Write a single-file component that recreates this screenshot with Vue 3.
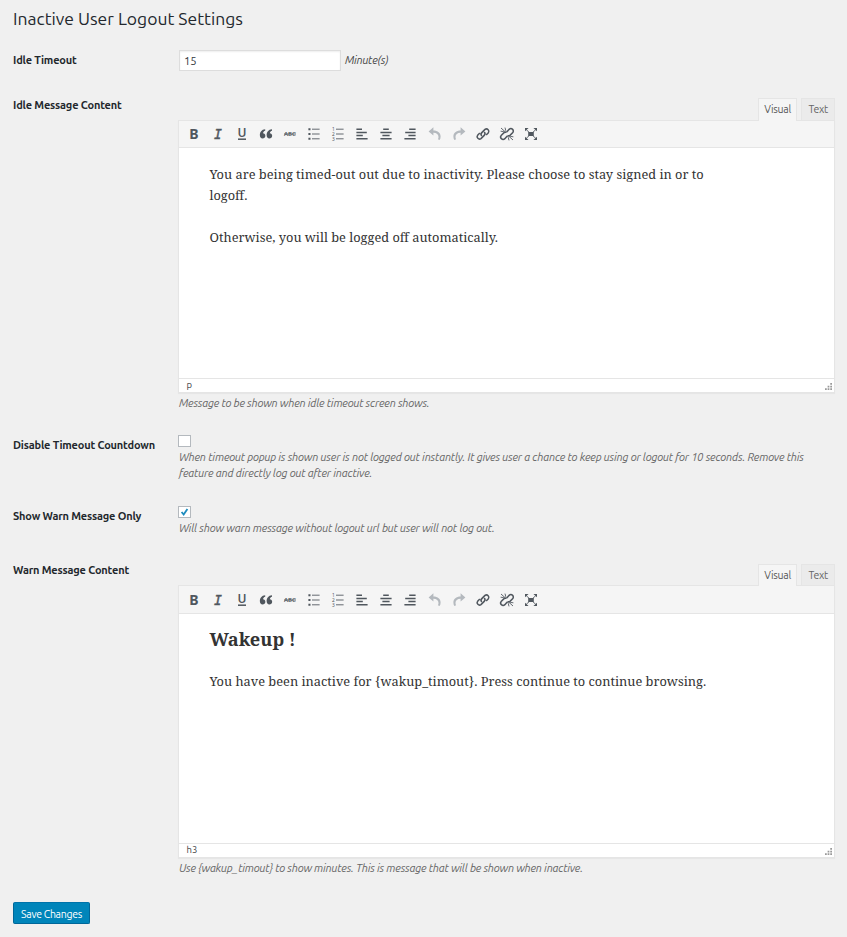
<script setup>
import { ref } from 'vue'

const timeout = ref('15')
const disableCountdown = ref(false)
const warnOnly = ref(true)

const idleTab = ref('Visual')
const warnTab = ref('Visual')
const tabs = ['Visual', 'Text']

const editors = [
  {
    id: 'idle',
    label: 'Idle Message Content',
    tab: idleTab,
    path: 'p',
    help: 'Message to be shown when idle timeout screen shows.',
  },
  {
    id: 'warn',
    label: 'Warn Message Content',
    tab: warnTab,
    path: 'h3',
    help: 'Use {wakup_timout} to show minutes. This is message that will be shown when inactive.',
  },
]

// toolbar buttons: text glyphs or shapes on a 20x20 grid
const tools = [
  { name: 'bold', text: 'B' },
  { name: 'italic', text: 'I' },
  { name: 'underline', text: 'U', lines: 'M5 16.5h10' },
  { name: 'quote', fill: 'M9 4C4.5 4.3 2.3 7.7 2.3 11.3c0 2.7 1.3 4.4 3.4 4.4 1.9 0 3.5-1.3 3.5-3.4 0-1.8-1.2-3.1-2.9-3.1C6.4 7.5 7.4 6.4 9 6zM17.5 4c-4.5.3-6.7 3.7-6.7 7.3 0 2.7 1.3 4.4 3.4 4.4 1.9 0 3.5-1.3 3.5-3.4 0-1.8-1.2-3.1-2.9-3.1 .1-1.7 1.1-2.8 2.7-3.2z' },
  { name: 'strike', text: 'ABC', thin: 'M2.5 10h15' },
  { name: 'bullist', thin: 'M7.5 4h9.5M7.5 10h9.5M7.5 16h9.5', fill: 'M3 2.7h2.6v2.6H3zM3 8.7h2.6v2.6H3zM3 14.7h2.6v2.6H3z' },
  { name: 'numlist', thin: 'M7.5 4h9.5M7.5 10h9.5M7.5 16h9.5', text: '123' },
  { name: 'left', lines: 'M3 4h7M3 8h13M3 12h8M3 16h14' },
  { name: 'center', lines: 'M6.5 4h7M3 8h14M5.5 12h9M3 16h14' },
  { name: 'right', lines: 'M9 4h8M4 8h13M8 12h9M3 16h14' },
  { name: 'undo', off: true, fill: 'M8 1.5v4c5.5 0 9 3.2 9 7.5 0 1.8-.4 3.3-1.2 4.5l-2.2-.8c.5-.9.8-1.9.8-3.1 0-3-2.3-5.1-6.4-5.1v3.5L2 7z' },
  { name: 'redo', off: true, fill: 'M12 1.5v4C6.5 5.5 3 8.7 3 13c0 1.8.4 3.3 1.2 4.5l2.2-.8c-.5-.9-.8-1.9-.8-3.1 0-3 2.3-5.1 6.4-5.1V12L18 7z' },
  { name: 'link', lines: 'M8.5 12.5a3 3 0 0 1 0-4.200l4-4a3 3 0 0 1 4.200 4.200l-2.700 2.700M11.500 7.500a3 3 0 0 1 0 4.200l-4 4a3 3 0 0 1-4.200-4.200L6 8.800' },
  { name: 'unlink', lines: 'M9.700 7.500l3-3.300a3 3 0 0 1 4.300 4.300l-3.300 3.200a3 3 0 0 1-3.200.3M10.300 12.500l-3 3.300a3 3 0 0 1-4.300-4.300l3.300-3.200a3 3 0 0 1 3.200-.3', thin: 'M2.500 2.500l5 4.500M7.500 2l1 4M2 6.500l4 .5M12.500 13l5 4.500M11.500 14l1 4M14 13l4 .5' },
  { name: 'full', fill: 'M6.500 7.500h7v5h-7zM2.500 2.500h4.500L2.500 6.500zM17.500 2.500h-4.500l4.500 4zM2.500 17.500h4.500l-4.500-4zM17.500 17.500h-4.500l4.500-4z', thin: 'M4 4.500l12 11M16 4.500L4 15.500' },
]
</script>

<template>
  <form class="wrap" @submit.prevent>
    <h1>Inactive User Logout Settings</h1>

    <div class="row row-timeout">
      <label class="label" for="timeout">Idle Timeout</label>
      <div class="field inline">
        <input id="timeout" v-model="timeout" class="number" type="text">
        <i class="unit">Minute(s)</i>
      </div>
    </div>

    <template v-for="ed in editors" :key="ed.id">
      <!-- checkbox options sit between the two editors -->
      <template v-if="ed.id === 'warn'">
        <div class="row row-check">
          <div class="label">Disable Timeout Countdown</div>
          <div class="field">
            <input v-model="disableCountdown" class="native" type="checkbox" id="countdown">
            <label class="check" for="countdown">
              <svg v-if="disableCountdown" viewBox="0 0 12 12"><path d="M2.5 6l2.5 3 4.5-6.5" /></svg>
            </label>
            <p class="help">
              When timeout popup is shown user is not logged out instantly. It gives user a chance to keep using or logout for 10 seconds. Remove this<br>
              feature and directly log out after inactive.
            </p>
          </div>
        </div>
        <div class="row row-check second">
          <div class="label">Show Warn Message Only</div>
          <div class="field">
            <input v-model="warnOnly" class="native" type="checkbox" id="warnonly">
            <label class="check" for="warnonly">
              <svg v-if="warnOnly" viewBox="0 0 12 12"><path d="M2.5 6l2.5 3 4.5-6.5" /></svg>
            </label>
            <p class="help">Will show warn message without logout url but user will not log out.</p>
          </div>
        </div>
      </template>

      <div class="row" :class="'row-' + ed.id">
        <div class="label">{{ ed.label }}</div>
        <div class="field">
          <div class="tabs">
            <button
              v-for="t in tabs"
              :key="t"
              type="button"
              class="tab"
              :class="{ active: ed.tab.value === t }"
              @click="ed.tab.value = t"
            >{{ t }}</button>
          </div>
          <div class="editor">
            <div class="toolbar">
              <span v-for="tool in tools" :key="tool.name" class="tool" :class="[tool.name, { off: tool.off }]">
                <svg viewBox="0 0 20 20">
                  <path v-if="tool.fill" class="fill" :d="tool.fill" />
                  <path v-if="tool.lines" class="lines" :d="tool.lines" />
                  <path v-if="tool.thin" class="thin" :d="tool.thin" />
                  <template v-if="tool.name === 'numlist'">
                    <text x="4.2" y="6.2">1</text>
                    <text x="4.2" y="12.2">2</text>
                    <text x="4.2" y="18.2">3</text>
                  </template>
                  <text v-else-if="tool.text" x="10" y="16">{{ tool.text }}</text>
                </svg>
              </span>
            </div>
            <div class="content">
              <template v-if="ed.id === 'idle'">
                <p>You are being timed-out out due to inactivity. Please choose to stay signed in or to<br>logoff.</p>
                <p>Otherwise, you will be logged off automatically.</p>
              </template>
              <template v-else>
                <h3>Wakeup !</h3>
                <p>You have been inactive for {wakup_timout}. Press continue to continue browsing.</p>
              </template>
            </div>
            <div class="status">
              <span>{{ ed.path }}</span>
              <svg class="grip" viewBox="0 0 8 8">
                <path d="M6 0h2v2H6zM3 3h2v2H3zM6 3h2v2H6zM0 6h2v2H0zM3 6h2v2H3zM6 6h2v2H6z" />
              </svg>
            </div>
          </div>
          <p class="help">{{ ed.help }}</p>
        </div>
      </div>
    </template>

    <button class="save" type="submit">Save Changes</button>
  </form>
</template>

<style>
body {
  margin: 0;
  background: #f0f0f0;
}
</style>

<style scoped>
.wrap {
  box-sizing: border-box;
  height: 937px;
  padding: 0 12px 0 13px;
  font-family: Ubuntu, "Noto Sans", sans-serif;
  font-size: 11px;
  color: #444;
  overflow: hidden;
}

h1 {
  margin: 0;
  height: 50px;
  line-height: 38px;
  font-size: 17.55px;
  font-weight: 400;
  color: #23282d;
  white-space: nowrap;
}

.row {
  display: grid;
  grid-template-columns: 165px 1fr;
}

.label {
  font-weight: 700;
  line-height: 16px;
  font-size: 11px;
  letter-spacing: -0.18px;
  color: #23282d;
  white-space: nowrap;
}

.row-timeout {
  height: 48px;
}
.row-timeout .label {
  padding-top: 2px;
}

.inline {
  display: flex;
  align-items: flex-start;
}

.number {
  box-sizing: border-box;
  width: 162px;
  height: 21px;
  margin-left: 1px;
  padding: 0 4px;
  border: 1px solid #ddd;
  background: #fff;
  font: inherit;
  font-size: 11.3px;
  color: #32373c;
  box-shadow: inset 0 1px 2px rgba(0, 0, 0, 0.07);
  outline: none;
}

.unit {
  margin-left: 4px;
  line-height: 20px;
  letter-spacing: -0.25px;
}

.row-idle {
  height: 337px;
}
.row-warn {
  height: 338px;
}
.row-idle .label,
.row-warn .label {
  line-height: 15px;
}
.row-warn .label {
  line-height: 13px;
}

.tabs {
  display: flex;
  justify-content: flex-end;
  gap: 4px;
  height: 21px;
}
.row-idle .tabs {
  height: 22px;
}

.tab {
  box-sizing: border-box;
  height: 100%;
  padding: 0 6px;
  border: 1px solid #e5e5e5;
  border-bottom: 0;
  background: #ebebeb;
  font: inherit;
  font-size: 10.5px;
  letter-spacing: -0.25px;
  color: #666;
}
.tab.active {
  height: calc(100% + 1px);
  padding: 0 5.5px 2px;
  background: #f5f5f5;
  color: #555;
  z-index: 1;
}
.row-idle .tab {
  padding-bottom: 2px;
}
.row-idle .tab.active {
  padding-bottom: 3px;
}

.editor {
  border: 1px solid #e5e5e5;
  background: #fff;
  box-shadow: 0 1px 1px rgba(0, 0, 0, 0.04);
}

.toolbar {
  display: flex;
  box-sizing: border-box;
  height: 28px;
  padding-left: 2.6px;
  border-bottom: 1px solid #e5e5e5;
  background: #f5f5f5;
}
.row-idle .toolbar {
  height: 27px;
}

.tool {
  display: flex;
  align-items: center;
  justify-content: center;
  width: 24.1px;
  height: 27px;
  color: #50575e;
}
.row-idle .tool {
  height: 26px;
}
.tool.off {
  color: #b4b9be;
}
.tool svg {
  width: 16px;
  height: 16px;
  overflow: visible;
}
.fill {
  fill: currentColor;
}
.lines {
  fill: none;
  stroke: currentColor;
  stroke-width: 1.9;
}
.thin {
  fill: none;
  stroke: currentColor;
  stroke-width: 1.1;
}
.tool text {
  fill: currentColor;
  font-family: "Noto Sans", sans-serif;
  font-weight: 700;
  font-size: 17.5px;
  text-anchor: middle;
}
.tool.italic text {
  font-family: "DejaVu Sans Mono", monospace;
  font-style: italic;
  font-weight: 400;
  font-size: 16.5px;
  stroke: currentColor;
  stroke-width: 0.5;
}
.tool.underline text {
  font-size: 15px;
  font-weight: 600;
  transform: translateY(-2.2px);
}
.tool.strike text {
  font-size: 7.5px;
  font-weight: 600;
  transform: translateY(-3.3px);
}
.tool.numlist text {
  font-size: 6px;
  font-weight: 400;
}

.content {
  box-sizing: border-box;
  height: 230px;
  padding: 15px 30.5px;
  font-family: "Noto Serif", "Droid Serif", "DejaVu Serif", serif;
  font-size: 12.81px;
  line-height: 21px;
  color: #333;
  white-space: nowrap;
}
.row-idle .content {
  padding-top: 16px;
}
.row-warn .content {
  height: 229px;
}
.content p {
  margin: 0 0 21px;
}
.content h3 {
  margin: 0 0 21px;
  font-size: 18.2px;
  line-height: 21px;
}

.status {
  display: flex;
  justify-content: space-between;
  align-items: flex-end;
  box-sizing: border-box;
  height: 14px;
  padding: 0 2px 0 7.5px;
  border-top: 1px solid #e5e5e5;
  font-size: 9.5px;
  line-height: 14px;
}
.grip {
  width: 7px;
  height: 7px;
  margin-bottom: 2px;
  fill: #999;
}

.help {
  margin: 2px 0 0 1px;
  font-size: 11px;
  line-height: 16px;
  font-style: italic;
  letter-spacing: -0.178px;
  color: #666;
  white-space: nowrap;
}
.row-idle .help,
.row-warn .help {
  letter-spacing: -0.205px;
}

.row-check {
  height: 71px;
}
.row-check.second {
  height: 58px;
}
.row-check .label {
  padding-top: 2px;
}

.native {
  position: absolute;
  opacity: 0;
}
.check {
  display: block;
  box-sizing: border-box;
  width: 13px;
  height: 12px;
  border: 1px solid #b4b9be;
  background: #fff;
}
.check svg {
  display: block;
  width: 11px;
  height: 10px;
  fill: none;
  stroke: #1e8cbe;
  stroke-width: 2.2;
}

.save {
  display: block;
  box-sizing: border-box;
  width: 77px;
  height: 22px;
  padding: 1px 0 0;
  border: 1px solid #006799;
  border-color: #0073aa #006799 #006799;
  border-radius: 2px;
  background: #0085ba;
  font: inherit;
  font-size: 10.5px;
  letter-spacing: -0.3px;
  color: #fff;
  white-space: nowrap;
}
</style>
